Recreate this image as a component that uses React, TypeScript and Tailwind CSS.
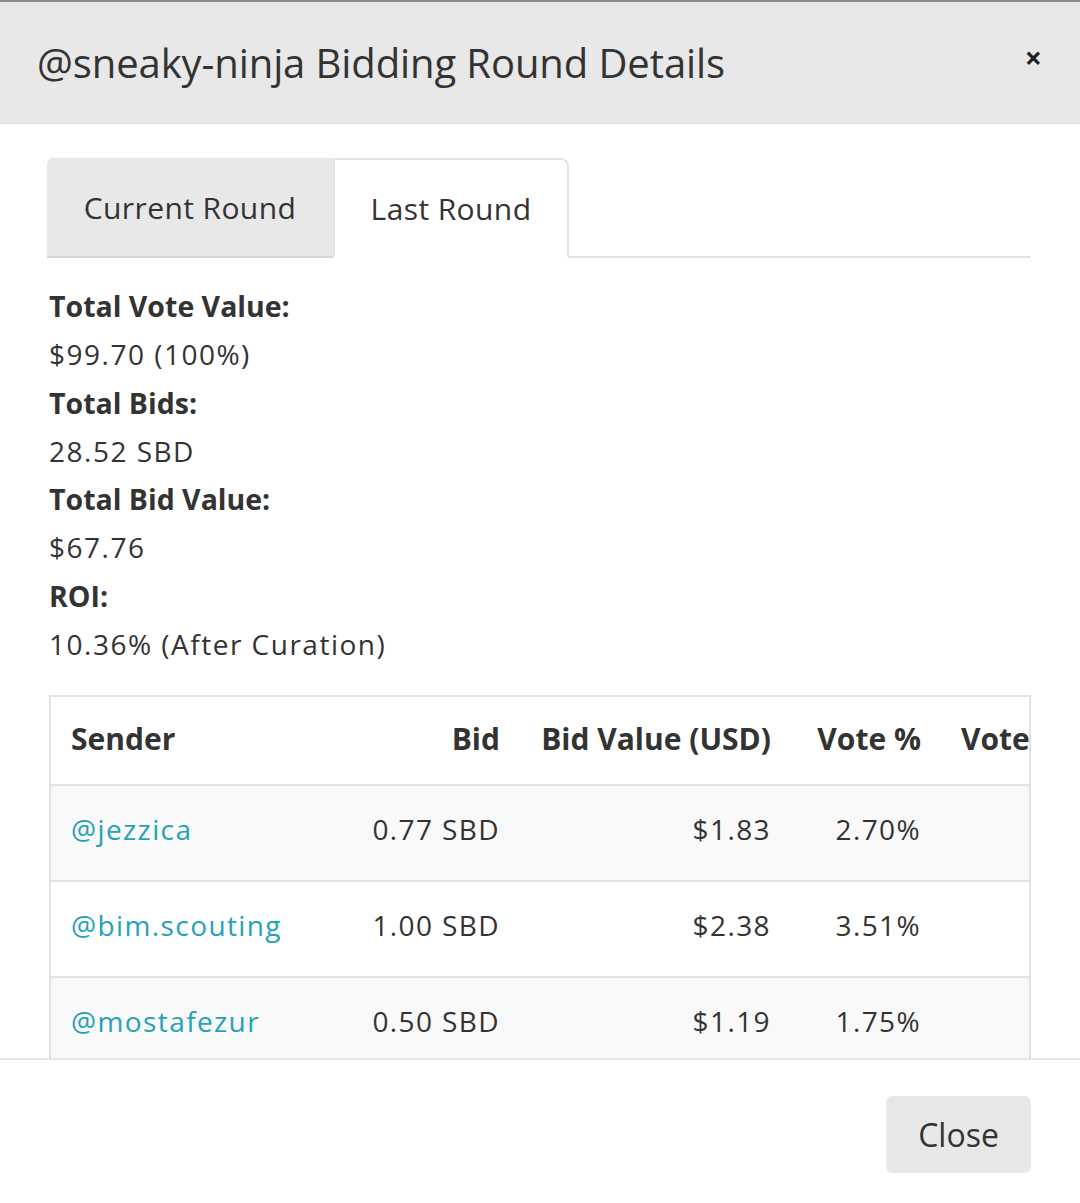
import React from 'react';

const rows = [
    { sender: '@jezzica', bid: '0.77 SBD', value: '$1.83', pct: '2.70%', vote: '$2.69' },
    { sender: '@bim.scouting', bid: '1.00 SBD', value: '$2.38', pct: '3.51%', vote: '$3.50' },
    { sender: '@mostafezur', bid: '0.50 SBD', value: '$1.19', pct: '1.75%', vote: '$1.75' },
];

const stats = [
    ['Total Vote Value:', '$99.70 (100%)'],
    ['Total Bids:', '28.52 SBD'],
    ['Total Bid Value:', '$67.76'],
    ['ROI:', '10.36% (After Curation)'],
];

export default function App() {
    return (
        <div className="min-h-screen bg-white text-[#333] font-['Open_Sans',sans-serif]">
            {/* Header */}
            <div className="h-[124px] border-t-2 border-[#8a8a8a] bg-[#e8e8e8] border-b border-b-[#dcdcdc] flex items-center justify-between pl-[37px] pr-[38px]">
                <h4 className="text-[40px] leading-none tracking-[-0.1px]">@sneaky-ninja Bidding Round Details</h4>
                <button className="text-[30px] font-bold leading-none text-[#222] pb-[10px]">×</button>
            </div>

            {/* Body */}
            <div className="h-[934px] overflow-hidden pl-[47px] pr-[49px] pt-[34px]">
                <div className="flex border-b-2 border-[#e3e3e3] h-[100px]">
                    <div className="w-[286px] bg-[#e8e8e8] rounded-tl-[6px] border-b-2 border-[#d6d6d6] -mb-[2px] flex items-center justify-center text-[30px] tracking-[0.4px] pt-[1px]">
                        Current Round
                    </div>
                    <div className="w-[236px] bg-white rounded-tr-[8px] border-2 border-[#e3e3e3] border-b-white -mb-[2px] flex items-center justify-center text-[30px] tracking-[0.4px]">
                        Last Round
                    </div>
                </div>

                <div className="pt-[24px] pl-[2px] text-[28px] leading-[48.3px]">
                    {stats.map(([k, v]) => (
                        <div key={k}>
                            <div className="font-bold text-[28.5px]">{k}</div>
                            <div className="tracking-[1.5px]">{v}</div>
                        </div>
                    ))}
                </div>

                <div className="mt-[27px] ml-[2px] border-2 border-[#e3e3e3] overflow-hidden">
                    <table className="border-collapse whitespace-nowrap text-[28px] table-fixed w-[1150px]">
                        <thead>
                            <tr className="h-[88px] border-b-2 border-[#e3e3e3] text-[30px]">
                                <th className="w-[289px] text-left font-bold px-[20px] pb-[4px]">Sender</th>
                                <th className="w-[180px] text-right font-bold px-[20px] pb-[4px]">Bid</th>
                                <th className="w-[271px] text-right font-bold px-[20px] pb-[4px]">Bid Value (USD)</th>
                                <th className="w-[150px] text-right font-bold px-[20px] pb-[4px]">Vote %</th>
                                <th className="w-[260px] text-left font-bold px-[20px] pb-[4px]">Vote Value (USD)</th>
                            </tr>
                        </thead>
                        <tbody>
                            {rows.map((r, i) => (
                                <tr key={r.sender} className={`h-[96px] border-b-2 border-[#e3e3e3] tracking-[1.4px] ${i % 2 === 0 ? 'bg-[#f9f9f9]' : 'bg-white'}`}>
                                    <td className="px-[20px] pb-[8px] text-[#26a2b8]">{r.sender}</td>
                                    <td className="px-[20px] pb-[8px] text-right">{r.bid}</td>
                                    <td className="px-[20px] pb-[8px] text-right">{r.value}</td>
                                    <td className="px-[20px] pb-[8px] text-right">{r.pct}</td>
                                    <td className="px-[20px] pb-[8px] text-right"></td>
                                </tr>
                            ))}
                        </tbody>
                    </table>
                </div>
            </div>

            {/* Footer */}
            <div className="border-t-2 border-[#e5e5e5] flex justify-end pt-[36px] pr-[49px]">
                <button className="w-[145px] h-[77px] rounded-[6px] bg-[#e8e8e8] text-[32px] text-[#333]">Close</button>
            </div>
        </div>
    );
}
